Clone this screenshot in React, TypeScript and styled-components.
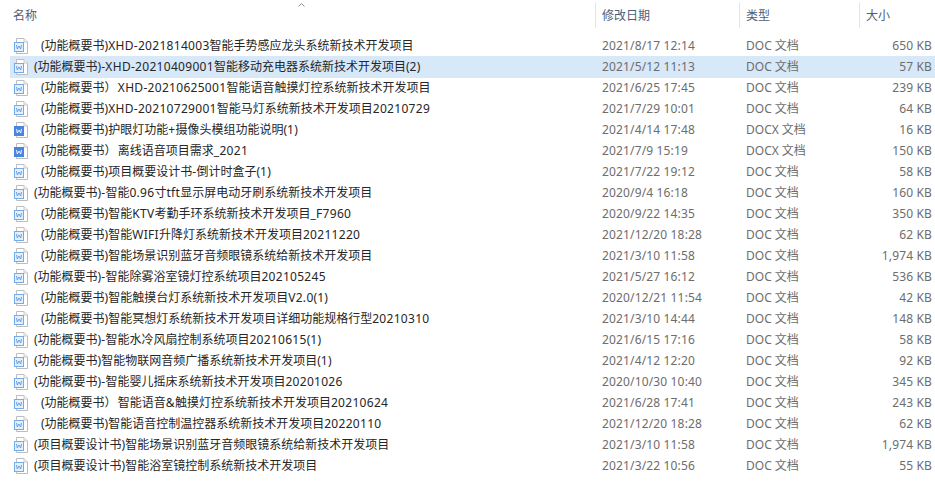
import React from "react";
import styled, { createGlobalStyle } from "styled-components";

interface FileRow {
  name: string;
  date: string;
  type: "DOC" | "DOCX";
  size: string;
  indent?: boolean;
  selected?: boolean;
}

const files: FileRow[] = [
  { name: "(功能概要书)XHD-2021814003智能手势感应龙头系统新技术开发项目", date: "2021/8/17 12:14", type: "DOC", size: "650 KB", indent: true },
  { name: "(功能概要书)-XHD-20210409001智能移动充电器系统新技术开发项目(2)", date: "2021/5/12 11:13", type: "DOC", size: "57 KB", selected: true },
  { name: "(功能概要书）\u200aXHD-20210625001智能语音触摸灯控系统新技术开发项目", date: "2021/6/25 17:45", type: "DOC", size: "239 KB", indent: true },
  { name: "(功能概要书)XHD-20210729001智能马灯系统新技术开发项目20210729", date: "2021/7/29 10:01", type: "DOC", size: "64 KB", indent: true },
  { name: "(功能概要书)护眼灯功能+摄像头模组功能说明(1)", date: "2021/4/14 17:48", type: "DOCX", size: "16 KB", indent: true },
  { name: "(功能概要书）\u200a离线语音项目需求_2021", date: "2021/7/9 15:19", type: "DOCX", size: "150 KB", indent: true },
  { name: "(功能概要书)项目概要设计书-倒计时盒子(1)", date: "2021/7/22 19:12", type: "DOC", size: "58 KB", indent: true },
  { name: "(功能概要书)-智能0.96寸tft显示屏电动牙刷系统新技术开发项目", date: "2020/9/4 16:18", type: "DOC", size: "160 KB" },
  { name: "(功能概要书)智能KTV考勤手环系统新技术开发项目_F7960", date: "2020/9/22 14:35", type: "DOC", size: "350 KB", indent: true },
  { name: "(功能概要书)智能WIFI升降灯系统新技术开发项目20211220", date: "2021/12/20 18:28", type: "DOC", size: "62 KB", indent: true },
  { name: "(功能概要书)智能场景识别蓝牙音频眼镜系统给新技术开发项目", date: "2021/3/10 11:58", type: "DOC", size: "1,974 KB", indent: true },
  { name: "(功能概要书)-智能除雾浴室镜灯控系统项目202105245", date: "2021/5/27 16:12", type: "DOC", size: "536 KB" },
  { name: "(功能概要书)智能触摸台灯系统新技术开发项目V2.0(1)", date: "2020/12/21 11:54", type: "DOC", size: "42 KB", indent: true },
  { name: "(功能概要书)智能冥想灯系统新技术开发项目详细功能规格行型20210310", date: "2021/3/10 14:44", type: "DOC", size: "148 KB", indent: true },
  { name: "(功能概要书)-智能水冷风扇控制系统项目20210615(1)", date: "2021/6/15 17:16", type: "DOC", size: "58 KB" },
  { name: "(功能概要书)智能物联网音频广播系统新技术开发项目(1)", date: "2021/4/12 12:20", type: "DOC", size: "92 KB" },
  { name: "(功能概要书)-智能婴儿摇床系统新技术开发项目20201026", date: "2020/10/30 10:40", type: "DOC", size: "345 KB" },
  { name: "(功能概要书）\u200a智能语音&触摸灯控系统新技术开发项目20210624", date: "2021/6/28 17:41", type: "DOC", size: "243 KB", indent: true },
  { name: "(功能概要书)智能语音控制温控器系统新技术开发项目20220110", date: "2021/12/20 18:28", type: "DOC", size: "62 KB", indent: true },
  { name: "(项目概要设计书)智能场景识别蓝牙音频眼镜系统给新技术开发项目", date: "2021/3/10 11:58", type: "DOC", size: "1,974 KB" },
  { name: "(项目概要设计书)智能浴室镜控制系统新技术开发项目", date: "2021/3/22 10:56", type: "DOC", size: "55 KB" },
];

// latin runs are a bit wider in the original font than in Noto Sans
const splitRuns = (text: string) =>
  text.split(/([A-Za-z0-9.\-_&+]+)/).map((part, i) =>
    i % 2 === 1 ? <LatinRun key={i}>{part}</LatinRun> : part
  );

const DocIcon: React.FC<{ solid: boolean }> = ({ solid }) => (
  <IconBox width="16" height="18" viewBox="0 0 16 18">
    <path d="M3.5 1.5h7.5l3.5 3.5v11.5h-11z" fill="#fff" stroke="#bdbdbd" />
    <path d="M11 1.5v3.5h3.5" fill="#f4f4f4" stroke="#c8c8c8" />
    <rect
      x="1.5"
      y="5.5"
      width="9"
      height="9"
      fill={solid ? "#4a86e0" : "#e3effb"}
      stroke={solid ? "#4a86e0" : "#74abe8"}
    />
    <path
      d="M3.5 8l.8 4 1.7-3 1.7 3 .8-4"
      fill="none"
      stroke={solid ? "#fff" : "#5a96e0"}
      strokeWidth="0.9"
    />
  </IconBox>
);

const App: React.FC = () => {
  return (
    <Page>
      <GlobalStyle />
      <SortArrow width="8" height="4" viewBox="0 0 8 4">
        <path d="M0.5 3.5L3.5 0.5L6.5 3.5" fill="none" stroke="#8c8c8c" />
      </SortArrow>
      <HeaderRow>
        <HeaderCell>名称</HeaderCell>
        <HeaderCell $divider>修改日期</HeaderCell>
        <HeaderCell $divider>类型</HeaderCell>
        <HeaderCell $divider>大小</HeaderCell>
      </HeaderRow>
      <List>
        {files.map((file) => (
          <Row key={file.name} $selected={file.selected}>
            <NameCell>
              <DocIcon solid={file.type === "DOCX"} />
              <Name $indent={file.indent}>{splitRuns(file.name)}</Name>
            </NameCell>
            <DateCell>{file.date}</DateCell>
            <TypeCell>{file.type} 文档</TypeCell>
            <SizeCell>{file.size}</SizeCell>
          </Row>
        ))}
      </List>
    </Page>
  );
};

export default App;

// Styled Components
const GlobalStyle = createGlobalStyle`
  html, body {
    margin: 0;
    background: #fff;
  }
`;

const Page = styled.div`
  position: relative;
  width: 935px;
  height: 503px;
  overflow: hidden;
  background: #fff;
  font-family: "Noto Sans", "Noto Sans CJK SC", sans-serif;
  font-size: 12px;
  line-height: 16px;
`;

const SortArrow = styled.svg`
  position: absolute;
  left: 298px;
  top: 3px;
`;

const HeaderRow = styled.div`
  display: grid;
  grid-template-columns: 595px 144px 120px 76px;
  box-sizing: border-box;
  height: 29px;
  padding-top: 2px;
`;

const HeaderCell = styled.div<{ $divider?: boolean }>`
  display: flex;
  align-items: center;
  box-sizing: border-box;
  height: 26px;
  padding-top: 2px;
  padding-left: ${(p) => (p.$divider ? "6px" : "13px")};
  color: #4c607a;
  border-left: ${(p) => (p.$divider ? "1px solid #e5e5e5" : "none")};
`;

const List = styled.div`
  display: flex;
  flex-direction: column;
  padding-top: 6px;
`;

const Row = styled.div<{ $selected?: boolean }>`
  display: grid;
  grid-template-columns: 585px 144px 120px 76px;
  align-items: center;
  height: 21px;
  margin-left: 10px;
  background: ${(p) => (p.$selected ? "#d7e8f8" : "transparent")};
  box-shadow: ${(p) => (p.$selected ? "0 1px 0 #d7e8f8" : "none")};
`;

const NameCell = styled.div`
  display: flex;
  align-items: center;
  color: #262626;
  white-space: nowrap;
`;

const IconBox = styled.svg`
  flex: none;
  margin-left: 3px;
`;

const Name = styled.span<{ $indent?: boolean }>`
  margin-left: ${(p) => (p.$indent ? "12px" : "5px")};
`;

const LatinRun = styled.span`
  letter-spacing: 0.3px;
`;

const DateCell = styled.div`
  padding-left: 7px;
  color: #6d6d6d;
  letter-spacing: 0.15px;
`;

const TypeCell = styled.div`
  padding-left: 7px;
  color: #6d6d6d;
`;

const SizeCell = styled.div`
  padding-right: 3px;
  text-align: right;
  color: #6d6d6d;
  letter-spacing: 0.15px;
`;
